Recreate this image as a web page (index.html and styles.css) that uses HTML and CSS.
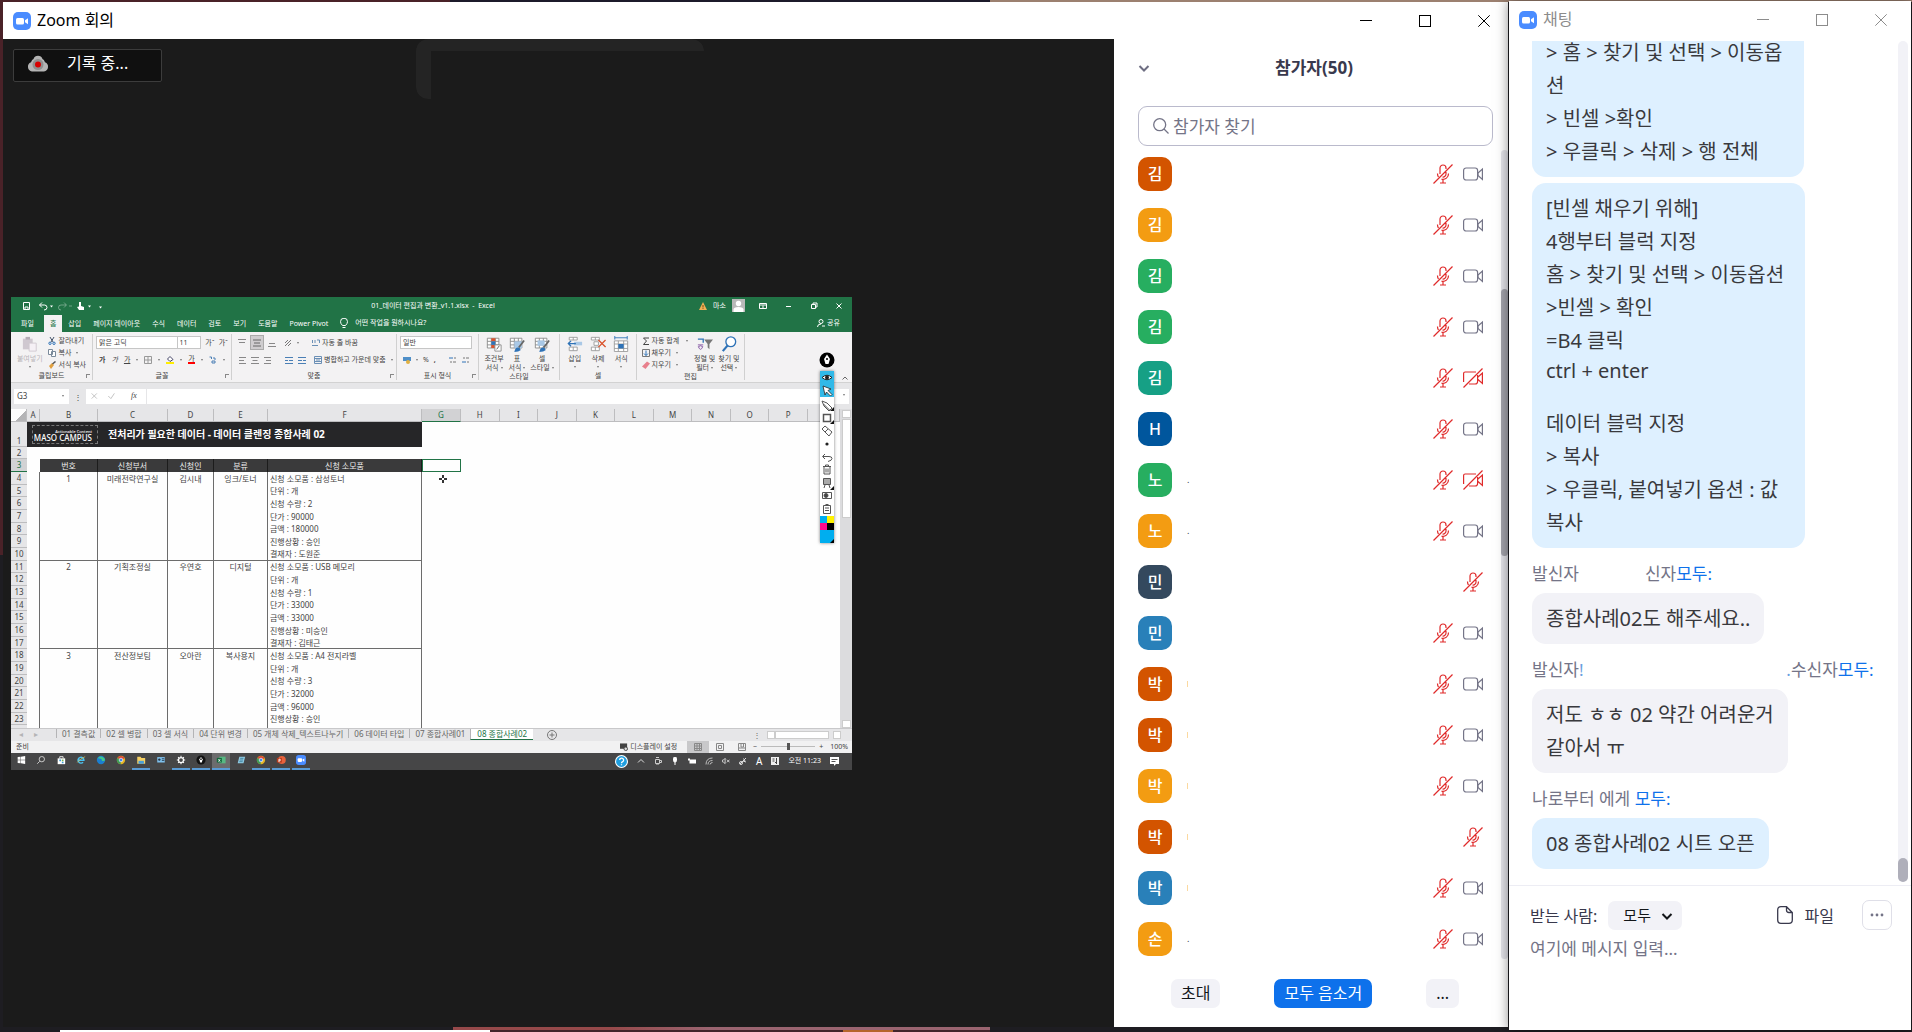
FILE: index.html
```html
<!DOCTYPE html>
<html lang="ko">
<head>
    <meta charset="UTF-8">
    <meta name="viewport" content="width=device-width, initial-scale=1.0">
    <title>Zoom 회의</title>
    <link rel="stylesheet" href="styles.css">
</head>
<body>

    <!-- Shared icons -->
    <svg class="sprite" aria-hidden="true">
        <symbol id="zoom-logo" viewBox="0 0 18 18"><rect width="18" height="18" rx="5" fill="#4a8cff"/><rect x="3" y="6" width="8" height="6.500" rx="1.500" fill="#fff"/><path d="M12 8.300l3-2v6l-3-2z" fill="#fff"/></symbol>
        <symbol id="win-min" viewBox="0 0 12 12"><path d="M0 5.500h12" stroke="currentColor" fill="none"/></symbol>
        <symbol id="win-max" viewBox="0 0 12 12"><rect x=".5" y=".5" width="11" height="11" stroke="currentColor" fill="none"/></symbol>
        <symbol id="win-close" viewBox="0 0 12 12"><path d="M.3.300l11.400 11.400M11.700.300L.3 11.700" stroke="currentColor" fill="none"/></symbol>
        <symbol id="mic-off" viewBox="0 0 20 20"><g fill="none" stroke="#e02b2b" stroke-width="1.200"><path d="M7 10V4a3 3 0 0 1 6 0v1M13 8v2a3 3 0 0 1-3.500 3M4.500 9.500q0 2 1 3.500M15.500 9.500a5.500 5.500 0 0 1-7 5.600M10 15.500v3.500M7 19h6M.5 19.500l19-19"/></g></symbol>
        <symbol id="cam" viewBox="0 0 20 20"><g fill="none" stroke="#747487" stroke-width="1.200"><rect x=".6" y="4" width="14" height="12" rx="2.500"/><path d="M15 9l4.400-4v10.500L15 11.500z"/></g></symbol>
        <symbol id="cam-off" viewBox="0 0 20 20"><g fill="none" stroke="#e02b2b" stroke-width="1.200"><path d="M.6 14V5.500q0-1.500 1.500-1.500H13M14.600 7v6.500q0 2.500-2.500 2.500H6M15 9l4.400-4v10.500L15 11.500M.5 19.500l19-19"/></g></symbol>
        <symbol id="chevron" viewBox="0 0 12 12"><path d="M1.500 4L6 8.500 10.500 4" stroke="currentColor" stroke-width="2" fill="none"/></symbol>
        <symbol id="grid-edit" viewBox="0 0 18 18"><path d="M1.500 2.500h13v11h-13zM1.500 6h13M1.500 10h13M6 2.500v11M10.500 2.500v11" fill="#fff" stroke="#8a8a8a"/></symbol>
        <symbol id="brush" viewBox="0 0 18 18"><path d="M17 5l-6 8" stroke="#666" stroke-width="2"/><path d="M6 18q1-5 4-5t3 3q-2 2-7 2z" fill="#2f73b7"/></symbol>
        <symbol id="chrome" viewBox="0 0 12 12"><circle cx="6" cy="6" r="5" fill="#e6b422"/><path d="M6 6L1.700 3.500A5 5 0 0 1 10.500 4z" fill="#db4437"/><path d="M6 6L1.700 3.500A5 5 0 0 0 5.500 11z" fill="#3c9b58"/><circle cx="6" cy="6" r="2.200" fill="#4285f4" stroke="#fff" stroke-width=".8"/></symbol>
    </svg>

    <div class="desktop">

        <!-- Meeting window -->
        <main class="meeting">
            <header class="titlebar">
                <svg class="logo"><use href="#zoom-logo"/></svg>
                <h1>Zoom 회의</h1>
                <div class="controls">
                    <button aria-label="최소화"><svg><use href="#win-min"/></svg></button>
                    <button aria-label="최대화"><svg><use href="#win-max"/></svg></button>
                    <button aria-label="닫기"><svg><use href="#win-close"/></svg></button>
                </div>
            </header>

            <div class="meeting-body">
                <section class="stage">
                    <div class="recording">
                        <svg viewBox="0 0 22 18"><path d="M5 17.500a4.800 4.800 0 0 1-1-9.200Q5 5.500 6.500 5a4.800 4.800 0 0 1 9 0Q17 5.500 18 8.300a4.800 4.800 0 0 1-1 9.200z" fill="#b4b4b4"/><circle cx="11" cy="10.500" r="5.500" fill="#8e8e8e"/><circle cx="11" cy="10.500" r="3" fill="#d80000"/></svg>
                        <span>기록 중...</span>
                    </div>
                    <div class="ghost"></div>

                    <!-- Shared Excel screen -->
                    <div class="excel">
                        <div class="xl-title">
                            <svg class="quick" viewBox="0 0 90 12" fill="none" stroke="#fff"><path d="M1.500 2.500h6v7h-6zM3 9.500V7h3v2.500" /><path d="M17.500 5h5q2.500 0 2.500 2.500T22 10M20 2.500L17.500 5 20 7.500"/><path d="M28 5.500h3l-1.500 2zM66 5.500h3l-1.500 2zM77 6.500h3l-1.500 2z" fill="#fff" stroke="none"/><path d="M44 5h-5q-2.500 0-2.500 2.500T39 10M42 2.500L44.500 5 42 7.500M47 6h3" opacity=".35"/><path d="M57 2h2v4l3 1v3h-5l-2-3 2-.5z" fill="#fff" stroke="none"/></svg>
                            <span class="xl-name">01_데이터 편집과 변환_v1.1.xlsx&nbsp; - &nbsp;Excel</span>
                            <div class="xl-user">
                                <svg viewBox="0 0 8 8"><path d="M4 0l4 8H0z" fill="#f0b055"/><path d="M4 3v2.500M4 6.200v.8" stroke="#7a4a10"/></svg>
                                <span>마소</span>
                                <svg class="face" viewBox="0 0 13 13"><rect width="13" height="13" fill="#b9b9b9"/><circle cx="6.500" cy="4.500" r="2.700" fill="#fff"/><path d="M1.500 13V10.500q0-2.500 5-2.500t5 2.500V13z" fill="#fff"/></svg>
                                <svg class="xl-win" viewBox="0 0 84 8" fill="none" stroke="#fff"><path d="M.5 1.500h7v5h-7zM.5 3h7M4 3.500v2.500M27 4.500h5M52.500 2.500h4v4h-4zM54 2.500v-1.500h4v4h-1.500M77.500 1.500l5 5M82.500 1.500l-5 5"/></svg>
                            </div>
                        </div>
                        <nav class="xl-tabs">
                            <a href="#">파일</a><a href="#" class="on">홈</a><a href="#">삽입</a><a href="#">페이지 레이아웃</a><a href="#">수식</a><a href="#">데이터</a><a href="#">검토</a><a href="#">보기</a><a href="#">도움말</a><a href="#">Power Pivot</a>
                            <svg viewBox="0 0 8 10" fill="none" stroke="#fff"><path d="M2.500 7.500Q.5 5.500.5 3.700a3.300 3.300 0 0 1 7 0Q7.500 5.500 5.500 7.500zM2.500 9.500h3"/></svg>
                            <span>어떤 작업을 원하시나요?</span>
                            <span class="share"><svg viewBox="0 0 8 8" fill="none" stroke="#fff"><circle cx="4" cy="2.500" r="2"/><path d="M.5 8q0-3 3.500-3M5 7h3"/></svg>공유</span>
                        </nav>

                        <div class="ribbon">
                            <div class="group clip">
                                <div class="group-body">
                                    <button class="big off"><svg viewBox="0 0 18 18"><path d="M1 3h11v12H1z" fill="#cfc8d0"/><path d="M4 1h5v3H4z" fill="#b3acb5"/><path d="M8 8h8v9H8z" fill="#f5f0f5" stroke="#d0c8d0"/></svg>붙여넣기<i></i></button>
                                    <div class="stack">
                                        <button><svg viewBox="0 0 8 8" fill="none" stroke="#44546a"><path d="M2 0l3 5M6 0L3 5"/><circle cx="2" cy="6.300" r="1.200" stroke="#2f73b7"/><circle cx="6" cy="6.300" r="1.200" stroke="#2f73b7"/></svg>잘라내기</button>
                                        <button><svg viewBox="0 0 8 8" fill="#fff" stroke="#7a8a9a"><path d="M.5.500h4v5h-4zM3.500 2.500h4v5h-4z"/></svg>복사 <i></i></button>
                                        <button><svg viewBox="0 0 8 8"><path d="M1 5l3-3 2 2-3 4z" fill="#e0a040"/><path d="M4.500 3L7.500.500" stroke="#555" stroke-width="1.500"/></svg>서식 복사</button>
                                    </div>
                                </div>
                                <div class="group-name">클립보드<b></b></div>
                            </div>

                            <div class="group font">
                                <div class="group-body rows">
                                    <div class="line">
                                        <select class="face-name" aria-label="글꼴"><option>맑은 고딕</option></select><select class="face-size" aria-label="크기"><option>11</option></select>
                                        <button>가ˆ</button><button>가ˇ</button>
                                    </div>
                                    <div class="line wide">
                                        <button><strong>가</strong></button><button><em>가</em></button><button><u>가</u></button><i></i>
                                        <svg viewBox="0 0 8 8" fill="none" stroke="#999"><path d="M.5.500h7v7h-7zM4 .5v7M.5 4h7"/></svg><i></i>
                                        <svg viewBox="0 0 8 8"><path d="M1.500 3L4 .500 7 3.500 4 5.500z" fill="#fff" stroke="#446"/><path d="M0 6h8v2H0z" fill="#ffee00"/></svg><i></i>
                                        <button class="ink">가</button><i></i>
                                        <svg viewBox="0 0 8 8" fill="none" stroke="#4a7fb5"><path d="M.5 1h2v2M5 1v2h2M3 5h3v2H3z"/></svg><i></i>
                                    </div>
                                </div>
                                <div class="group-name">글꼴<b></b></div>
                            </div>

                            <div class="group align">
                                <div class="group-body rows">
                                    <div class="line wide">
                                        <svg viewBox="0 0 8 8" stroke="#888"><path d="M0 .5h8M1 3.500h6"/></svg>
                                        <svg class="pressed" viewBox="0 0 8 8" stroke="#666"><path d="M0 1.500h8M1 4.500h6M0 7.500h8"/></svg>
                                        <svg viewBox="0 0 8 8" stroke="#888"><path d="M1 4.500h6M0 7.500h8"/></svg>
                                        <svg class="near" viewBox="0 0 8 8" fill="none" stroke="#777"><path d="M1 7L7 1M1 4l3-3M4 7l3-3"/></svg><i></i>
                                        <button class="text apart"><svg viewBox="0 0 8 8" fill="none" stroke="#6a8fb5"><path d="M.5 1v3M3 1v3M5 1h2.500v3M0 6.500h6"/></svg>자동 줄 바꿈</button>
                                    </div>
                                    <div class="line wide">
                                        <svg viewBox="0 0 8 8" stroke="#888"><path d="M1 1.500h7M1 4.500h5M1 7.500h7"/></svg>
                                        <svg viewBox="0 0 8 8" stroke="#888"><path d="M0 1.500h8M1.500 4.500h5M0 7.500h8"/></svg>
                                        <svg viewBox="0 0 8 8" stroke="#888"><path d="M0 1.500h7M2 4.500h5M0 7.500h7"/></svg>
                                        <svg class="apart" viewBox="0 0 8 8" stroke="#4a7fb5"><path d="M0 1.500h8M4 4.500h4M0 7.500h8M0 4.500h3" /></svg>
                                        <svg viewBox="0 0 8 8" stroke="#4a7fb5"><path d="M0 1.500h8M5 4.500h3M0 7.500h8M0 4.500h4"/></svg>
                                        <button class="text near"><svg viewBox="0 0 8 8" fill="none" stroke="#6a8fb5"><path d="M.5.500h7v7h-7zM2 4h4M.5 2.500h7M.5 5.500h7"/></svg>병합하고 가운데 맞춤</button><i></i>
                                    </div>
                                </div>
                                <div class="group-name">맞춤<b></b></div>
                            </div>

                            <div class="group number">
                                <div class="group-body rows">
                                    <div class="line"><select class="num-format" aria-label="표시 형식"><option>일반</option></select></div>
                                    <div class="line wide">
                                        <svg viewBox="0 0 8 8"><path d="M0 1h8v4H0z" fill="#4f8fc8"/><circle cx="5" cy="6" r="2" fill="#e0b040"/></svg><i></i>
                                        <span>%</span><span><strong>,</strong></span>
                                        <svg class="apart" viewBox="0 0 8 8" stroke="#777"><path d="M0 2h4" stroke="#2f73b7"/><path d="M5 2h2M1 6h2M4 6h3"/></svg>
                                        <svg viewBox="0 0 8 8" stroke="#777"><path d="M0 6h4" stroke="#2f73b7"/><path d="M1 2h2M4 2h3M5 6h2"/></svg>
                                    </div>
                                </div>
                                <div class="group-name">표시 형식<b></b></div>
                            </div>

                            <div class="group style">
                                <div class="group-body">
                                    <button class="big"><svg viewBox="0 0 18 18"><use href="#grid-edit"/><path d="M6 2.500h4.500V6H6zM6 10h4v3.500H6z" fill="#d9532c"/><path d="M6 6h4.500v4H6z" fill="#2f73b7"/><path d="M10 10h7v7h-7z" fill="#fff" stroke="#888"/><path d="M12 15l3-4" stroke="#555"/></svg>조건부<span>서식<i></i></span></button>
                                    <button class="big"><svg viewBox="0 0 18 18"><use href="#grid-edit"/><path d="M6 6h8.500v7.500H6z" fill="#a9c8e6"/><use href="#brush"/></svg>표<span>서식<i></i></span></button>
                                    <button class="big"><svg viewBox="0 0 18 18"><use href="#grid-edit"/><path d="M4 5h8v6H4z" fill="#a9c8e6"/><use href="#brush"/></svg>셀<span>스타일<i></i></span></button>
                                </div>
                                <div class="group-name">스타일</div>
                            </div>

                            <div class="group cells">
                                <div class="group-body">
                                    <button class="big"><svg viewBox="0 0 18 18"><path d="M2.500 1.500h9v3h-9zM7 1.500v3M2.500 12.500h9v4h-9zM7 12.500v4" fill="#fff" stroke="#999"/><path d="M8 6.500h9v4H8z" fill="#a9c8e6"/><path d="M1 8.500h9M4.500 5.500l-3 3 3 3" fill="none" stroke="#2f73b7" stroke-width="1.500"/></svg>삽입<i></i></button>
                                    <button class="big"><svg viewBox="0 0 18 18"><path d="M1.500 1.500h9v3h-9zM6 1.500v3M1.500 12.500h9v4h-9zM6 12.500v4M4.500 6.500h5v4h-5z" fill="#fff" stroke="#999"/><path d="M9.500 4.500l8 8M17.500 4.500l-8 8" stroke="#d9532c" stroke-width="1.500"/></svg>삭제<i></i></button>
                                    <button class="big"><svg viewBox="0 0 18 18"><path d="M1.500 5.500h15v12h-15zM1.500 9h15M1.500 14h15M6 5.500v12M12 5.500v12" fill="#fff" stroke="#999"/><path d="M6 9h6v5H6z" fill="#2f73b7"/><path d="M2 2h14M2 0v4M16 0v4" stroke="#2f73b7"/></svg>서식<i></i></button>
                                </div>
                                <div class="group-name">셀</div>
                            </div>

                            <div class="group edit">
                                <div class="group-body">
                                    <div class="stack">
                                        <button><svg viewBox="0 0 8 8" fill="none" stroke="#444"><path d="M7 1H1.500L4.500 4l-3 3.500H7"/></svg>자동 합계&nbsp; <i></i></button>
                                        <button><svg viewBox="0 0 8 8" fill="none"><path d="M.5.500h7v7h-7z" stroke="#777"/><path d="M4 1.500v5M2 4.500l2 2 2-2" stroke="#2f73b7"/></svg>채우기<i></i></button>
                                        <button><svg viewBox="0 0 8 8"><path d="M0 5.500L5 .500l3 2L3.500 8z" fill="#e8808c"/></svg>지우기<i></i></button>
                                    </div>
                                    <button class="big"><svg viewBox="0 0 18 18"><path d="M1 3.500h6v4" fill="none" stroke="#2f73b7" stroke-width="1.500"/><path d="M8 4h10l-4 5v6l-2-2V9z" fill="#777"/><path d="M1 10h6M1.500 12q2.500-2 5 0-2.500 6-5 0z" fill="none" stroke="#8050a0"/></svg>정렬 및<span>필터<i></i></span></button>
                                    <button class="big"><svg viewBox="0 0 18 18" fill="#fff" stroke="#2f73b7"><path d="M2 17l6-7" stroke-width="2.500"/><circle cx="11" cy="6.500" r="5.500" stroke-width="1.500"/></svg>찾기 및<span>선택<i></i></span></button>
                                </div>
                                <div class="group-name">편집</div>
                            </div>
                            <svg class="fold" viewBox="0 0 6 4" fill="none" stroke="#666"><path d="M.5 3.500L3 1l2.500 2.500"/></svg>
                        </div>

                        <div class="formula">
                            <label class="ref"><input value="G3" aria-label="이름 상자"><i></i></label>
                            <span class="dots">⋮</span>
                            <div class="fx"><svg viewBox="0 0 48 10" fill="none" stroke="#bbb"><path d="M3 2l6 6M9 2L3 8M22 5l3 3 4-6"/></svg><em>fx</em></div>
                            <input class="bar" aria-label="수식 입력줄">
                            <span class="expand"><i></i></span>
                        </div>

                        <div class="sheet-area">
                            <div class="sheet">
                                <table>
                                    <colgroup><col class="c-no"><col class="c-a"><col class="c-b"><col class="c-c"><col class="c-d"><col class="c-e"><col class="c-f"><col class="c-g"><col><col><col><col><col><col><col><col><col><col class="c-q"></colgroup>
                                    <thead>
                                        <tr><th class="corner"></th><th>A</th><th>B</th><th>C</th><th>D</th><th>E</th><th>F</th><th class="sel">G</th><th>H</th><th>I</th><th>J</th><th>K</th><th>L</th><th>M</th><th>N</th><th>O</th><th>P</th><th></th></tr>
                                    </thead>
                                    <tbody>
                                        <tr class="banner"><th>1</th><td colspan="6"><div><span class="brand"><small>Actionable Content</small>MASO CAMPUS</span>전처리가 필요한 데이터 - 데이터 클렌징 종합사례 02</div></td><td colspan="11"></td></tr>
                                        <tr><th>2</th><td colspan="17"></td></tr>
                                        <tr class="head"><th class="sel">3</th><td></td><td>번호</td><td>신청부서</td><td>신청인</td><td>분류</td><td>신청 소모품</td><td class="active"></td><td colspan="10"></td></tr>
                                        <tr class="rec"><th>4</th><td></td><td>1</td><td>미래전략연구실</td><td>김시내</td><td>잉크/토너</td><td>신청 소모품 : 삼성토너</td><td colspan="11"></td></tr>
                                        <tr class="rec"><th>5</th><td></td><td></td><td></td><td></td><td></td><td>단위 : 개</td><td colspan="11"></td></tr>
                                        <tr class="rec"><th>6</th><td></td><td></td><td></td><td></td><td></td><td>신청 수량 : 2</td><td colspan="11"></td></tr>
                                        <tr class="rec"><th>7</th><td></td><td></td><td></td><td></td><td></td><td>단가 : 90000</td><td colspan="11"></td></tr>
                                        <tr class="rec"><th>8</th><td></td><td></td><td></td><td></td><td></td><td>금액 : 180000</td><td colspan="11"></td></tr>
                                        <tr class="rec"><th>9</th><td></td><td></td><td></td><td></td><td></td><td>진행상황 : 승인</td><td colspan="11"></td></tr>
                                        <tr class="rec last"><th>10</th><td></td><td></td><td></td><td></td><td></td><td>결재자 : 도원준</td><td colspan="11"></td></tr>
                                        <tr class="rec"><th>11</th><td></td><td>2</td><td>기획조정실</td><td>우연호</td><td>디지털</td><td>신청 소모품 : USB 메모리</td><td colspan="11"></td></tr>
                                        <tr class="rec"><th>12</th><td></td><td></td><td></td><td></td><td></td><td>단위 : 개</td><td colspan="11"></td></tr>
                                        <tr class="rec"><th>13</th><td></td><td></td><td></td><td></td><td></td><td>신청 수량 : 1</td><td colspan="11"></td></tr>
                                        <tr class="rec"><th>14</th><td></td><td></td><td></td><td></td><td></td><td>단가 : 33000</td><td colspan="11"></td></tr>
                                        <tr class="rec"><th>15</th><td></td><td></td><td></td><td></td><td></td><td>금액 : 33000</td><td colspan="11"></td></tr>
                                        <tr class="rec"><th>16</th><td></td><td></td><td></td><td></td><td></td><td>진행상황 : 미승인</td><td colspan="11"></td></tr>
                                        <tr class="rec last"><th>17</th><td></td><td></td><td></td><td></td><td></td><td>결재자 : 김태근</td><td colspan="11"></td></tr>
                                        <tr class="rec"><th>18</th><td></td><td>3</td><td>전산정보팀</td><td>오아란</td><td>복사용지</td><td>신청 소모품 : A4 전지라벨</td><td colspan="11"></td></tr>
                                        <tr class="rec"><th>19</th><td></td><td></td><td></td><td></td><td></td><td>단위 : 개</td><td colspan="11"></td></tr>
                                        <tr class="rec"><th>20</th><td></td><td></td><td></td><td></td><td></td><td>신청 수량 : 3</td><td colspan="11"></td></tr>
                                        <tr class="rec"><th>21</th><td></td><td></td><td></td><td></td><td></td><td>단가 : 32000</td><td colspan="11"></td></tr>
                                        <tr class="rec"><th>22</th><td></td><td></td><td></td><td></td><td></td><td>금액 : 96000</td><td colspan="11"></td></tr>
                                        <tr class="rec"><th>23</th><td></td><td></td><td></td><td></td><td></td><td>진행상황 : 승인</td><td colspan="11"></td></tr>
                                        <tr class="rec"><th></th><td></td><td></td><td></td><td></td><td></td><td></td><td colspan="11"></td></tr>
                                    </tbody>
                                </table>
                                <svg class="cursor" viewBox="0 0 8 8"><path d="M3 0h2v3h3v2H5v3H3V5H0V3h3z" fill="#333"/><path d="M3 3h2v2H3z" fill="#fff"/></svg>
                            </div>
                            <div class="vscroll"><span class="up"></span><span class="thumb"></span><span class="down"></span></div>
                        </div>

                        <div class="sheet-tabs">
                            <span class="arrows">◂</span><span class="arrows">▸</span>
                            <a href="#">01 결측값</a><a href="#">02 셀 병합</a><a href="#">03 셀 서식</a><a href="#">04 단위 변경</a><a href="#">05 개체 삭제_텍스트나누기</a><a href="#">06 데이터 타입</a><a href="#">07 종합사례01</a><a href="#" class="on">08 종합사례02</a>
                            <svg class="add" viewBox="0 0 10 10" fill="none" stroke="#777"><circle cx="5" cy="5" r="4.500"/><path d="M5 2.500v5M2.500 5h5"/></svg>
                            <div class="hscroll"><span>⋮</span><b class="left"></b><b class="track"></b><b class="right"></b></div>
                        </div>

                        <div class="status">
                            <span>준비</span>
                            <div class="status-right">
                                <svg class="disp" viewBox="0 0 9 8"><path d="M0 0h8v6H0z" fill="#444"/><circle cx="6.500" cy="6" r="2" fill="#ddd" stroke="#444"/></svg>
                                <span class="disp-text">디스플레이 설정</span>
                                <span class="view on"><svg viewBox="0 0 8 8" fill="none" stroke="#888"><path d="M.5.500h7v7h-7zM3 0v8M5.500 0v8M0 3h8M0 5.500h8"/></svg></span>
                                <span class="view"><svg viewBox="0 0 8 8" fill="none" stroke="#888"><path d="M.5.500h7v7h-7zM2.500 2.500h3v3h-3z"/></svg></span>
                                <span class="view"><svg viewBox="0 0 8 8" fill="none" stroke="#888"><path d="M.5.500h7v7h-7zM3 0v4h2.500V0M0 5h8"/></svg></span>
                                <span>−</span><input type="range" aria-label="확대/축소"><span>+</span><span class="pct">100%</span>
                            </div>
                        </div>

                        <div class="taskbar">
                            <span><svg viewBox="0 0 12 12" fill="#fff"><path d="M2 2.500l3.500-.5v3.700H2zM6 2l5-.700v4.400H6zM2 6.300h3.500V10L2 9.500zM6 6.300h5v4.500L6 10z"/></svg></span>
                            <span><svg viewBox="0 0 12 12" fill="none" stroke="#ddd"><circle cx="7" cy="5" r="3.200"/><path d="M4.500 7.500L1.500 10.500"/></svg></span>
                            <span><svg viewBox="0 0 12 12"><path d="M2 4h9v7H2z" fill="#fff"/><path d="M4.500 4V2h4v2" fill="none" stroke="#fff"/><path d="M4 5.500h2v2H4zM7 8h2v2H7z" fill="#3a9ad9"/><path d="M7 5.500h2v2H7z" fill="#7ab648"/></svg></span>
                            <span><svg viewBox="0 0 12 12" fill="none" stroke="#4cc2f0" stroke-width="1.700"><path d="M3 6.200h6.500a3.500 3.500 0 1 0-1 2.500"/><path d="M1.500 9Q5 4 11 2" stroke="#e6c84f" stroke-width=".8"/></svg></span>
                            <span><svg viewBox="0 0 12 12"><circle cx="6" cy="6" r="5" fill="#1b7fd0"/><path d="M2 4a5 5 0 0 1 9 2q-1 2-4 1 1-3-5-3z" fill="#42c98a"/></svg></span>
                            <span><svg><use href="#chrome"/></svg></span>
                            <span class="open"><svg viewBox="0 0 12 12"><path d="M1.500 2h4l1 1.500h4.500v7h-9.500z" fill="#f5cf62"/><path d="M3 7h6.500v3.500H3z" fill="#4a9fd8"/></svg></span>
                            <span><svg viewBox="0 0 12 12"><path d="M1.500 2.500h9v6.500h-9z" fill="#7fc0ec"/><circle cx="4" cy="5.500" r="1.400" fill="#234"/><path d="M7 4.500h3M7 6.500h3" stroke="#234"/></svg></span>
                            <span class="open"><svg viewBox="0 0 12 12" fill="none" stroke="#fff"><circle cx="6" cy="6" r="3" stroke-width="1.500"/><path d="M6 1v1.500M6 9.500V11M1 6h1.500M9.500 6H11M2.500 2.500l1 1M8.500 8.500l1 1M2.500 9.500l1-1M8.500 3.500l1-1" stroke-width="1.300"/></svg></span>
                            <span class="open"><svg viewBox="0 0 12 12"><circle cx="6" cy="6" r="5.500" fill="#111"/><path d="M6 2.500l2 2.500-1 4H5L4 5z" fill="#fff"/><circle cx="6" cy="5" r="1" fill="#111"/></svg></span>
                            <span class="open now"><svg viewBox="0 0 12 12"><path d="M4 2h7.500v8H4z" fill="#58b883"/><path d="M1 3.500h6v5.500H1z" fill="#12683a"/><path d="M3 5l2 3M5 5L3 8" stroke="#fff"/></svg></span>
                            <span><svg viewBox="0 0 12 12"><path d="M4 2h7l-2 8H2z" fill="#8fcbe2"/><path d="M5 4h4M4.500 6h4M4 8h4" stroke="#3a7a98"/></svg></span>
                            <span class="open"><svg><use href="#chrome"/></svg></span>
                            <span class="open"><svg viewBox="0 0 12 12"><circle cx="7" cy="6" r="4.700" fill="#e8623c"/><path d="M1 3.500h6v5.500H1z" fill="#b83a1b"/><path d="M3.500 8.500V5h1.500v2H3.500" fill="none" stroke="#fff"/></svg></span>
                            <span class="open"><svg><use href="#zoom-logo"/></svg></span>
                            <div class="tray">
                                <svg class="help" viewBox="0 0 12 12"><circle cx="6" cy="6" r="5.500" fill="#1f9fe0" stroke="#fff"/><path d="M4.300 4.700a1.800 1.800 0 1 1 2.500 1.600Q6 6.800 6 7.500M6 8.500v1" fill="none" stroke="#fff" stroke-width="1.200"/></svg>
                                <svg viewBox="0 0 8 8" fill="none" stroke="#ddd"><path d="M1 5.500L4 2.500l3 3"/></svg>
                                <svg viewBox="0 0 8 8" fill="none" stroke="#ccc"><path d="M1.500 2.500h4v4h-4zM5.500 3.500h2v2h-2M2 .5h3M2 8h3"/></svg>
                                <svg viewBox="0 0 8 8" fill="none" stroke="#fff"><rect x="2.500" y="0" width="3" height="5" rx="1.500" fill="#fff"/><path d="M4 5v3"/></svg>
                                <svg viewBox="0 0 8 8" fill="#fff"><path d="M1.500 2.500H8v4H1.500zM0 1.500h2v2H0z"/></svg>
                                <svg viewBox="0 0 8 8" fill="none" stroke="#bbb"><path d="M1 7.500Q1 1 7.500 1M3 7.500Q3 3.500 7.500 3.500M5 7.500Q5.500 5.500 7.500 5.500"/></svg>
                                <svg viewBox="0 0 9 8" fill="none" stroke="#ddd"><path d="M.5 3h1L3.500 1v6l-2-2h-1zM5.500 2.500l3 3M8.500 2.500l-3 3"/></svg>
                                <svg viewBox="0 0 8 8" fill="none" stroke="#ddd"><path d="M1 7l3-3 3-3M4 4l3 1M4.500 1.500L6 4"/><circle cx="2" cy="6" r="1.500"/></svg>
                                <span class="ime">A</span>
                                <svg viewBox="0 0 8 8"><path d="M0 0h8v8H0z" fill="#eee"/><path d="M1.500 2h2M1.500 4h2M5.500 1v6M4 5.500h1" stroke="#444"/></svg>
                                <span>오전 11:23</span>
                                <svg class="note" viewBox="0 0 9 9"><path d="M0 0h9v7H6L4 9V7H0z" fill="#fff"/><path d="M1.500 2.500h6M1.500 4.500h4" stroke="#555"/></svg>
                            </div>
                        </div>

                        <!-- Screen pen palette -->
                        <div class="pen">
                            <svg class="pen-top" viewBox="0 0 16 16"><circle cx="8" cy="8" r="7.500" fill="#000"/><path d="M8 2.500L11 7l-1.500 5h-3L5 7z" fill="#fff"/><circle cx="8" cy="7" r="1" fill="#000"/></svg>
                            <svg class="pen-box" viewBox="0 0 14 172"><path d="M0 0h14v172H0z" fill="#fff"/><path d="M0 0h14v26H0z" fill="#31b9e8"/><path d="M2 6.500Q7 2 12 6.500 7 11 2 6.500z" fill="#fff" stroke="#222"/><circle cx="7" cy="6.500" r="2" fill="#222"/><path d="M3 15l8 3-3 1.500 4 4-1.500 1.500-4-4L5 24z" fill="#fff" stroke="#222" stroke-width=".8"/><g fill="none" stroke="#555"><path d="M2 30l2 5 5 5 3-3-5-5zM3.500 33l6 6"/><path d="M3.500 43.500h7v7h-7z" stroke-width="1.500"/><path d="M2 58l3-3 7 6-3 4zM5 61l3-3"/><path d="M5 83L2.500 85.500 5 88M3 85.500h6q3 0 3 2t-4 3"/><path d="M3 95.500h8M5.500 95.500V94h3v1.500M4 96v7h6v-7M6 97.500v4M8 97.500v4"/><path d="M3.500 107.500h7v6h-7zM5 114l-1 3M9 114l1 3" fill="#aaa"/><path d="M2.500 121.500h9v6h-9z"/><circle cx="6" cy="124.500" r="2" fill="#444"/><path d="M3.500 134.500h7v8h-7zM5.500 133.500h3M5 137h4M5 139.500h4"/></g><circle cx="7" cy="73" r="1.600" fill="#222"/><path d="M14 36v4h-4zM14 49v4h-4zM14 115v4h-4z" fill="#111"/><path d="M0 145h7v7H0zM0 159h14v13H0z" fill="#00aeef"/><path d="M7 145h7v7H7z" fill="#fff200"/><path d="M0 152h7v7H0z" fill="#ff0a8c"/><path d="M7 152h7v7H7zM14 168v4h-4z" fill="#000"/></svg>
                        </div>
                    </div>
                </section>

                <!-- Participants panel -->
                <aside class="people">
                    <div class="people-head">
                        <button aria-label="접기"><svg><use href="#chevron"/></svg></button>
                        <h2>참가자(50)</h2>
                    </div>
                    <label class="search">
                        <svg viewBox="0 0 16 16" fill="none" stroke="#747487" stroke-width="1.300"><circle cx="6.700" cy="6.700" r="6"/><path d="M11 11l4.500 4.500"/></svg>
                        <input type="text" placeholder="참가자 찾기" aria-label="참가자 찾기">
                    </label>
                    <div class="people-scroll">
                        <ul>
                            <li><span class="avatar rust">김</span><svg><use href="#mic-off"/></svg><svg><use href="#cam"/></svg></li>
                            <li><span class="avatar amber">김</span><svg><use href="#mic-off"/></svg><svg><use href="#cam"/></svg></li>
                            <li><span class="avatar green">김</span><svg><use href="#mic-off"/></svg><svg><use href="#cam"/></svg></li>
                            <li><span class="avatar green">김</span><svg><use href="#mic-off"/></svg><svg><use href="#cam"/></svg></li>
                            <li><span class="avatar teal">김</span><svg><use href="#mic-off"/></svg><svg><use href="#cam-off"/></svg></li>
                            <li><span class="avatar navy">H</span><svg><use href="#mic-off"/></svg><svg><use href="#cam"/></svg></li>
                            <li><span class="avatar green">노</span><span class="nick">.</span><svg><use href="#mic-off"/></svg><svg><use href="#cam-off"/></svg></li>
                            <li><span class="avatar amber">노</span><span class="nick">.</span><svg><use href="#mic-off"/></svg><svg><use href="#cam"/></svg></li>
                            <li><span class="avatar slate">민</span><svg><use href="#mic-off"/></svg></li>
                            <li><span class="avatar blue">민</span><svg><use href="#mic-off"/></svg><svg><use href="#cam"/></svg></li>
                            <li><span class="avatar rust">박</span><span class="nick mark"></span><svg><use href="#mic-off"/></svg><svg><use href="#cam"/></svg></li>
                            <li><span class="avatar rust">박</span><span class="nick mark"></span><svg><use href="#mic-off"/></svg><svg><use href="#cam"/></svg></li>
                            <li><span class="avatar amber">박</span><span class="nick mark"></span><svg><use href="#mic-off"/></svg><svg><use href="#cam"/></svg></li>
                            <li><span class="avatar rust">박</span><span class="nick mark"></span><svg><use href="#mic-off"/></svg></li>
                            <li><span class="avatar blue">박</span><span class="nick mark"></span><svg><use href="#mic-off"/></svg><svg><use href="#cam"/></svg></li>
                            <li><span class="avatar amber">손</span><span class="nick">.</span><svg><use href="#mic-off"/></svg><svg><use href="#cam"/></svg></li>
                        </ul>
                        <div class="people-bar"><span></span></div>
                    </div>
                    <div class="people-foot">
                        <button>초대</button>
                        <button class="primary">모두 음소거</button>
                        <button>...</button>
                    </div>
                </aside>
            </div>
        </main>

        <!-- Chat window -->
        <aside class="chat">
            <header class="titlebar">
                <svg class="logo"><use href="#zoom-logo"/></svg>
                <h1>채팅</h1>
                <div class="controls">
                    <button aria-label="최소화"><svg><use href="#win-min"/></svg></button>
                    <button aria-label="최대화"><svg><use href="#win-max"/></svg></button>
                    <button aria-label="닫기"><svg><use href="#win-close"/></svg></button>
                </div>
            </header>
            <div class="chat-scroll">
                <div class="messages">
                    <div class="bubble mine cont"><p>&gt; 홈 &gt; 찾기 및 선택 &gt; 이동옵<br>션</p><p>&gt; 빈셀 &gt;확인</p><p>&gt; 우클릭 &gt; 삭제 &gt; 행 전체</p></div>
                    <div class="bubble mine full"><p>[빈셀 채우기 위해]</p><p>4행부터 블럭 지정</p><p>홈 &gt; 찾기 및 선택 &gt; 이동옵션</p><p>&gt;빈셀 &gt; 확인</p><p>=B4 클릭</p><p class="latin">ctrl + enter</p><p class="blank"></p><p>데이터 블럭 지정</p><p>&gt; 복사</p><p>&gt; 우클릭, 붙여넣기 옵션 : 값<br>복사</p></div>
                    <div class="from">발신자<span class="hidden-name"></span>신자<a href="#">모두:</a></div>
                    <div class="bubble"><p>종합사례02도 해주세요..</p></div>
                    <div class="from">발신자<span class="hidden-name long"><i>!</i><i>.</i></span>수신자<a href="#">모두:</a></div>
                    <div class="bubble"><p>저도 ㅎㅎ 02 약간 어려운거<br>같아서 ㅠ</p></div>
                    <div class="from">나로부터 에게 <a href="#">모두:</a></div>
                    <div class="bubble mine"><p>08 종합사례02 시트 오픈</p></div>
                </div>
                <div class="chat-bar"><span></span></div>
            </div>
            <div class="compose">
                <div class="compose-row">
                    <label for="to">받는 사람:</label>
                    <div class="to"><select id="to"><option>모두</option></select><svg><use href="#chevron"/></svg></div>
                    <button class="file"><svg viewBox="0 0 16 18" fill="none" stroke="#39394d" stroke-width="1.300"><path d="M9.500.700H4Q.7.700.7 4v10q0 3.300 3.300 3.300h8q3.300 0 3.300-3.300V6.500zM9.500.700V4q0 2.500 2.500 2.500h3.300"/></svg>파일</button>
                    <button class="more" aria-label="더 보기"><svg viewBox="0 0 14 4" fill="#747487"><circle cx="2" cy="2" r="1.400"/><circle cx="7" cy="2" r="1.400"/><circle cx="12" cy="2" r="1.400"/></svg></button>
                </div>
                <textarea placeholder="여기에 메시지 입력..." aria-label="메시지"></textarea>
            </div>
        </aside>
    </div>
</body>
</html>
```

FILE: styles.css
```css
* {
    box-sizing: border-box;
}
body {
    margin: 0;
    font-family: "Noto Sans", "Noto Sans CJK KR", sans-serif;
    font-size: 17px;
    color: #39394d;
    background: #1e1d22;
}
button, input, select, textarea {
    font: inherit;
    color: inherit;
    border: none;
    background: none;
    padding: 0;
    margin: 0;
    outline: none;
    appearance: none;
}
a {
    color: inherit;
    text-decoration: none;
}
h1, h2, p, ul {
    margin: 0;
    padding: 0;
    font-weight: normal;
}
svg {
    display: block;
    flex: none;
}
.sprite {
    position: absolute;
    width: 0;
    height: 0;
}

/* Desktop and windows */
.desktop {
    display: flex;
    height: 100vh;
    overflow: hidden;
    padding: 1px 1px 2px 3px;
    background:
        linear-gradient(90deg, transparent 453px, #96494a 453px 610px, #9a6470 710px 990px, transparent 990px) left bottom 2px / 100% 3px no-repeat,
        linear-gradient(90deg, transparent 60px, #fff 60px 490px, #43262b 490px 843px, #b5652b 843px 893px, #43262b 893px 990px, transparent 990px) left bottom / 100% 2px no-repeat,
        linear-gradient(90deg, #4a2228 0 450px, #1c1a2a 450px 990px, #9c8070 990px) left top / 100% 2px no-repeat,
        linear-gradient(#4a2228, #4a2228) left top / 3px 555px no-repeat,
        #1e1d22;
}
.meeting {
    flex: 1;
    min-width: 0;
    display: flex;
    flex-direction: column;
    margin: 1px 1px 3px 0;
    background: #fff;
}
.titlebar {
    display: flex;
    align-items: center;
    height: 37px;
    padding: 0 18px 0 10px;
}
.titlebar h1 {
    flex: 1;
    margin-left: 6px;
    padding-bottom: 2px;
    font-size: 16px;
    line-height: 22px;
    color: #000;
}
.logo {
    width: 18px;
    height: 18px;
}
.controls {
    display: flex;
    gap: 47px;
    color: #000;
}
.controls svg {
    width: 12px;
    height: 12px;
}
.meeting-body {
    flex: 1;
    display: flex;
    min-height: 0;
}

/* Video stage */
.stage {
    position: relative;
    flex: 1;
    min-width: 0;
    display: flex;
    align-items: center;
    padding: 0 262px 0 8px;
    background: #1b1b1b;
}
.recording {
    position: absolute;
    left: 10px;
    top: 10px;
    display: flex;
    align-items: center;
    width: 149px;
    height: 33px;
    padding: 0 0 5px 13px;
    gap: 18px;
    border: 1px solid #3c3c3c;
    border-radius: 2px;
    background: #101010;
    color: #fff;
    font-size: 16px;
    line-height: 24px;
}
.recording svg {
    width: 22px;
    height: 18px;
}
.ghost {
    position: absolute;
    left: 413px;
    top: 0;
    width: 288px;
    height: 60px;
    border: solid #242424;
    border-width: 12px 0 0 15px;
    border-radius: 12px 12px 0 12px;
    -webkit-mask: linear-gradient(#000 0 12px, transparent 12px), linear-gradient(90deg, #000 0 15px, transparent 15px);
}

/* Excel window */
.excel {
    position: relative;
    flex: 1;
    min-width: 0;
    font-size: 7px;
    line-height: 10px;
    color: #444;
    background: #e6e6e8;
}
.excel i {
    display: inline-block;
    margin: 0 3px;
    border: solid transparent;
    border-width: 2px 1px 0;
    border-top-color: #777;
    vertical-align: middle;
}
.excel svg {
    width: 8px;
    height: 8px;
}
.xl-title {
    display: flex;
    align-items: center;
    justify-content: space-between;
    height: 18px;
    padding: 0 9px 0 11px;
    background: #217346;
    color: #fff;
}
.xl-title .quick {
    width: 90px;
    height: 12px;
    margin-right: 55px;
}
.xl-user {
    display: flex;
    align-items: center;
    gap: 6px;
}
.xl-title .face {
    width: 13px;
    height: 13px;
    margin-right: 8px;
}
.xl-title .xl-win {
    width: 84px;
}
.xl-tabs {
    display: flex;
    align-items: center;
    height: 17px;
    padding: 0 12px 0 4px;
    background: #217346;
    color: #fff;
    white-space: nowrap;
}
.xl-tabs a {
    padding: 4px 6px 3px;
}
.xl-tabs .on {
    margin-left: 4px;
    background: #f3f2f3;
    color: #217346;
}
.xl-tabs > svg {
    height: 10px;
    margin: 0 7px 0 6px;
}
.xl-tabs .share {
    display: flex;
    align-items: center;
    gap: 2px;
    margin-left: auto;
}

.ribbon {
    display: flex;
    height: 51px;
    padding-top: 2px;
    border-bottom: 1px solid #d2d2d2;
    background: #f3f2f3;
}
.group {
    display: flex;
    flex-direction: column;
    justify-content: space-between;
    border-right: 1px solid #d0d0d0;
    margin-bottom: 2px;
}
.clip { width: 82px; }
.font { width: 139px; }
.align { width: 165px; }
.number { width: 82px; }
.style { width: 81px; }
.cells { width: 77px; }
.edit { width: 108px; }
.group-body {
    display: flex;
    justify-content: space-around;
    padding: 1px 3px 0;
}
.group-body.rows {
    flex-direction: column;
    gap: 3px;
    padding: 2px 3px 0;
}
.group-name {
    position: relative;
    text-align: center;
    line-height: 9px;
}
.group-name b {
    position: absolute;
    right: 2px;
    top: 3px;
    width: 4px;
    height: 4px;
    border: solid #888;
    border-width: 1px 0 0 1px;
}
.big {
    display: flex;
    flex-direction: column;
    align-items: center;
    white-space: nowrap;
    line-height: 9px;
}
.excel .big > svg {
    width: 16px;
    height: 16px;
    margin: 1px 0 2px;
}
.big.off {
    color: #b8b4b8;
}
.big > i {
    margin-top: 3px;
}
.big span i {
    margin: 0 0 0 2px;
}
.stack {
    display: flex;
    flex-direction: column;
}
.stack button,
.line .text {
    display: flex;
    align-items: center;
    gap: 2px;
    height: 12px;
    white-space: nowrap;
}
.line {
    display: flex;
    align-items: center;
    gap: 4px;
    height: 14px;
    white-space: nowrap;
}
.line.wide {
    gap: 5px;
    padding-left: 3px;
}
.font .line.wide {
    gap: 6px;
}
.line.wide i {
    margin: 0;
}
.line .apart {
    margin-left: 8px;
}
.line .near {
    margin-left: 3px;
}
.font .ink {
    border-bottom: 2px solid #f00;
    line-height: 7px;
}
.ribbon select {
    height: 13px;
    padding: 0 2px;
    border: 1px solid #c6c6c6;
    background: #fff;
}
.ribbon .face-name {
    width: 83px;
}
.ribbon .face-size {
    width: 25px;
    margin-left: -5px;
}
.ribbon .num-format {
    width: 72px;
}
.excel .pressed {
    width: 12px;
    height: 13px;
    padding: 2px;
    background: #cfcdcf;
    outline: 1px solid #aaa;
}
.ribbon .fold {
    width: 6px;
    height: 4px;
    margin: auto 4px 2px auto;
}

.formula {
    display: flex;
    height: 26px;
    padding: 6px 3px 5px;
    font-size: 8px;
}
.ref {
    display: flex;
    align-items: center;
    width: 55px;
    background: #fff;
}
.ref input {
    width: 45px;
    padding-left: 3px;
}
.dots {
    width: 17px;
    text-align: center;
    line-height: 15px;
}
.fx {
    display: flex;
    align-items: center;
    width: 60px;
    background: #fff;
    font-family: "Liberation Serif", serif;
}
.fx svg {
    width: 45px;
    height: 10px;
    padding-left: 3px;
}
.formula .bar {
    flex: 1;
    margin-left: 1px;
    background: #fff;
}
.expand {
    width: 9px;
    background: #fff;
    line-height: 12px;
}

/* Sheet grid */
.sheet-area {
    display: flex;
    height: 319px;
}
.sheet {
    position: relative;
    flex: 1;
    min-width: 0;
    overflow: hidden;
    background: #fefefe;
}
.sheet table {
    width: 100%;
    table-layout: fixed;
    border-collapse: separate;
    border-spacing: 0;
    font-size: 8px;
    line-height: 11px;
}
.c-no { width: 16px; }
.c-a { width: 13px; }
.c-b { width: 58px; }
.c-c { width: 70px; }
.c-d { width: 46px; }
.c-e { width: 54px; }
.c-f { width: 154px; }
.c-g { width: 39px; }
.c-q { width: 32px; }
.sheet th {
    padding: 0;
    font-weight: normal;
    background: #e6e6e8;
    border: solid #bdbdbf;
    border-width: 0 0 1px;
}
.sheet thead th {
    height: 13px;
    border-width: 0 1px 1px 0;
}
.sheet th.corner {
    background: linear-gradient(135deg, transparent 60%, #b4b4b6 60%);
}
.sheet th.sel {
    background: #d2d2d4;
    color: #217346;
    border-bottom-color: #217346;
}
.sheet td {
    padding: 0;
    white-space: nowrap;
}
.sheet tbody tr {
    height: 13px;
}
.sheet tbody tr:nth-child(3n+2) {
    height: 12px;
}
.sheet tbody .banner {
    height: 25px;
}
.banner th {
    vertical-align: bottom;
}
.banner td:nth-child(2) {
    background: #262628;
    color: #fff;
    font-size: 10px;
    font-weight: bold;
}
.banner div {
    display: flex;
    align-items: center;
    gap: 10px;
    padding-left: 5px;
}
.brand {
    width: 66px;
    padding: 4px 5px 1px 0;
    border: 1px dashed #777;
    font-size: 8px;
    font-weight: 500;
    line-height: 8px;
    text-align: right;
}
.brand small {
    display: block;
    font-size: 4px;
    line-height: 4px;
}
.head td {
    text-align: center;
}
.head td:nth-child(n+3):nth-child(-n+7) {
    background: #3a3a3b;
    color: #eee;
    border-right: 1px solid #1c1c1c;
}
.sheet .head .active {
    border: 1px solid #217346;
}
.rec td {
    text-align: center;
}
.rec td:nth-child(n+2):nth-child(-n+7) {
    border-right: 1px solid #6c6c6c;
}
.rec td:nth-child(7) {
    text-align: left;
    padding-left: 2px;
}
.rec.last td:nth-child(n+3):nth-child(-n+7) {
    border-bottom: 1px solid #6c6c6c;
}
.excel .cursor {
    position: absolute;
    left: 428px;
    top: 66px;
}
.vscroll {
    display: flex;
    flex-direction: column;
    width: 12px;
    padding: 1px 1px 0 2px;
    background: #dcdcde;
}
.vscroll span {
    height: 8px;
    background: #fff;
    border: 1px solid #ccc;
}
.vscroll .thumb {
    height: 99px;
    margin-top: 1px;
}
.vscroll .down {
    margin-top: auto;
}

.sheet-tabs {
    display: flex;
    height: 13px;
    font-size: 8px;
    color: #666;
    border-top: 1px solid #c8c8ca;
}
.sheet-tabs a {
    padding: 0 5px;
    border-left: 1px solid #b4b4b6;
    height: 9px;
    line-height: 9px;
    white-space: nowrap;
}
.sheet-tabs .on {
    height: 11px;
    padding: 0 6px;
    color: #217346;
    background: #fff;
    border-bottom: 1px solid #217346;
}
.arrows {
    width: 12px;
    margin-right: 3px;
    text-align: right;
    color: #b4b4b6;
}
.arrows + a {
    margin-left: 15px;
}
.sheet-tabs .add {
    width: 10px;
    height: 10px;
    margin: 1px 0 0 14px;
}
.hscroll {
    display: flex;
    margin: 2px 11px 2px auto;
}
.hscroll b {
    width: 8px;
    background: #fff;
    border: 1px solid #ccc;
}
.hscroll span {
    margin-right: 6px;
    line-height: 8px;
}
.hscroll .track {
    width: 54px;
    margin-right: 4px;
}
.status {
    display: flex;
    align-items: center;
    justify-content: space-between;
    height: 12px;
    padding: 0 4px 0 5px;
    background: #f1f1f2;
}
.status-right {
    display: flex;
    align-items: center;
    height: 12px;
}
.status .disp-text {
    margin: 0 10px 0 2px;
}
.view {
    display: flex;
    align-items: center;
    justify-content: center;
    width: 22px;
    height: 12px;
}
.view.on {
    background: #c8c8ca;
}
.status span + input {
    width: 54px;
    height: 10px;
    margin: 0 4px;
    background: linear-gradient(#bbb, #bbb) center / 100% 1px no-repeat;
}
.status input::-webkit-slider-thumb {
    appearance: none;
    width: 3px;
    height: 7px;
    background: #555;
}
.status .pct {
    margin-left: 7px;
}
.taskbar {
    display: flex;
    height: 17px;
    background: #464647;
    color: #fff;
}
.taskbar > span {
    display: flex;
    align-items: center;
    justify-content: center;
    width: 20px;
    border-bottom: 2px solid transparent;
}
.taskbar > span svg {
    width: 10px;
    height: 10px;
}
.taskbar > .open {
    width: 18px;
    margin: 0 1px;
    border-bottom-color: #5a9bd5;
}
.taskbar > .now {
    background: #6c6c6d;
}
.tray {
    display: flex;
    align-items: center;
    gap: 9px;
    margin-left: auto;
    padding-right: 13px;
}
.tray .help {
    width: 13px;
    height: 13px;
}
.tray .ime {
    font-size: 10px;
}
.tray .note {
    width: 9px;
    height: 9px;
}

.pen {
    position: absolute;
    right: 17px;
    top: 55px;
    display: flex;
    flex-direction: column;
    align-items: center;
    gap: 3px;
}
.pen .pen-top {
    width: 16px;
    height: 16px;
}
.pen .pen-box {
    width: 14px;
    height: 172px;
    box-shadow: 0 0 3px rgba(0, 0, 0, 0.5);
}

/* Participants */
.people {
    display: flex;
    flex-direction: column;
    width: 394px;
}
.people-head {
    position: relative;
    height: 57px;
    text-align: center;
}
.people-head h2 {
    font-size: 17px;
    font-weight: bold;
    line-height: 57px;
    padding-left: 6px;
}
.people-head button {
    position: absolute;
    left: 24px;
    top: 23px;
    color: #6e6e82;
}
.people-head svg {
    width: 12px;
    height: 12px;
}
.search {
    display: flex;
    align-items: center;
    gap: 4px;
    height: 40px;
    margin: 10px 15px 2px 24px;
    padding-left: 14px;
    border: 1px solid #babacc;
    border-radius: 9px;
}
.search svg {
    width: 16px;
    height: 16px;
}
.search input {
    flex: 1;
}
input::placeholder,
textarea::placeholder {
    color: #747487;
    opacity: 1;
}
.people-scroll {
    position: relative;
    display: flex;
}
.people ul {
    flex: 1;
    list-style: none;
}
.people li {
    display: flex;
    align-items: center;
    justify-content: flex-end;
    gap: 10px;
    height: 51px;
    padding: 0 25px 0 24px;
}
.people li svg {
    width: 20px;
    height: 20px;
}
.avatar {
    width: 34px;
    height: 34px;
    margin-right: auto;
    border-radius: 10px;
    color: #fff;
    font-size: 16px;
    font-weight: 500;
    line-height: 34px;
    text-align: center;
}
.avatar:has(+ .nick) {
    margin-right: 5px;
}
.nick {
    flex: 1;
    font-size: 9px;
}
.nick.mark::before {
    content: "";
    display: block;
    width: 1px;
    height: 6px;
    background: #fbd9a0;
}
.rust { background: #d35400; }
.amber { background: #f39c12; }
.green { background: #27ae60; }
.teal { background: #16a085; }
.navy { background: #00569d; }
.slate { background: #34495e; }
.blue { background: #2980b9; }
.people-bar {
    position: absolute;
    right: 0;
    top: 2px;
    bottom: 5px;
    width: 7px;
    padding-top: 139px;
    border-radius: 4px;
    background: #e4e4ea;
}
.people-bar span {
    display: block;
    height: 267px;
    border-radius: 4px;
    background: #a4a4ac;
}
.people-foot {
    display: flex;
    justify-content: space-between;
    margin-top: 15px;
    padding: 0 49px 0 57px;
    font-size: 16px;
}
.people-foot button {
    height: 29px;
    padding: 0 10px;
    border-radius: 7px;
    background: #f2f2f7;
    line-height: 27px;
    color: #131619;
}
.people-foot .primary {
    background: #0e71eb;
    color: #fff;
}

/* Chat */
.chat {
    position: relative;
    display: flex;
    flex-direction: column;
    width: 402px;
    background: #fff;
    box-shadow: 0 0 12px rgba(0, 0, 0, 0.5);
}
.chat .titlebar {
    padding-right: 24px;
}
.chat h1,
.chat .controls {
    color: #8c8c8c;
}
.chat-scroll {
    flex: 1;
    min-height: 0;
    display: flex;
    margin-top: 3px;
    padding-right: 3px;
    border-bottom: 1px solid #ededf4;
}
.messages {
    flex: 1;
    display: flex;
    flex-direction: column;
    justify-content: flex-end;
    align-items: flex-start;
    overflow: hidden;
    padding: 0 0 16px 23px;
}
.bubble {
    flex: none;
    padding: 9px 14px;
    border-radius: 14px;
    background: #f2f2f7;
    font-size: 20px;
    line-height: 33px;
    color: #39393d;
    white-space: nowrap;
}
.bubble .latin {
    line-height: 28px;
}
.bubble .blank {
    height: 22px;
}
.mine {
    background: #def0ff;
}
.cont {
    width: 272px;
    margin-bottom: 6px;
    padding-top: 0;
    border-radius: 0 0 14px 14px;
}
.full {
    width: 273px;
}
.from {
    flex: none;
    display: flex;
    white-space: pre;
    margin: 14px 0 7px;
    font-size: 17px;
    line-height: 24px;
    color: #747487;
}
.from a {
    color: #0e71eb;
}
.hidden-name {
    display: flex;
    justify-content: space-between;
    width: 66px;
}
.hidden-name.long {
    width: 212px;
}
.hidden-name i {
    font-style: normal;
    color: #6a9fe0;
}
.chat-bar {
    display: flex;
    align-items: flex-end;
    width: 10px;
    margin-bottom: 3px;
    border-radius: 5px;
    background: #f2f2f7;
}
.chat-bar span {
    width: 10px;
    height: 24px;
    border-radius: 5px;
    background: #afafba;
}
.compose {
    height: 144px;
    padding: 14px 19px 0 21px;
}
.compose-row {
    display: flex;
    align-items: center;
    height: 30px;
    font-size: 16px;
}
.to {
    position: relative;
    margin-left: 11px;
}
.to select {
    width: 74px;
    height: 29px;
    padding-left: 15px;
    border-radius: 7px;
    background: #f2f2f7;
    color: #131619;
    font-size: 15px;
}
.to svg {
    position: absolute;
    right: 9px;
    top: 9px;
    width: 12px;
    height: 12px;
    color: #131619;
}
.file {
    display: flex;
    align-items: center;
    gap: 12px;
    margin-left: auto;
}
.file svg {
    width: 16px;
    height: 18px;
}
.more {
    display: flex;
    align-items: center;
    justify-content: center;
    width: 30px;
    height: 30px;
    margin-left: 28px;
    border: 1px solid #dfdfe8;
    border-radius: 7px;
}
.more svg {
    width: 14px;
    height: 4px;
}
.compose textarea {
    width: 100%;
    height: 80px;
    margin-top: 7px;
    line-height: 24px;
    resize: none;
}
```
